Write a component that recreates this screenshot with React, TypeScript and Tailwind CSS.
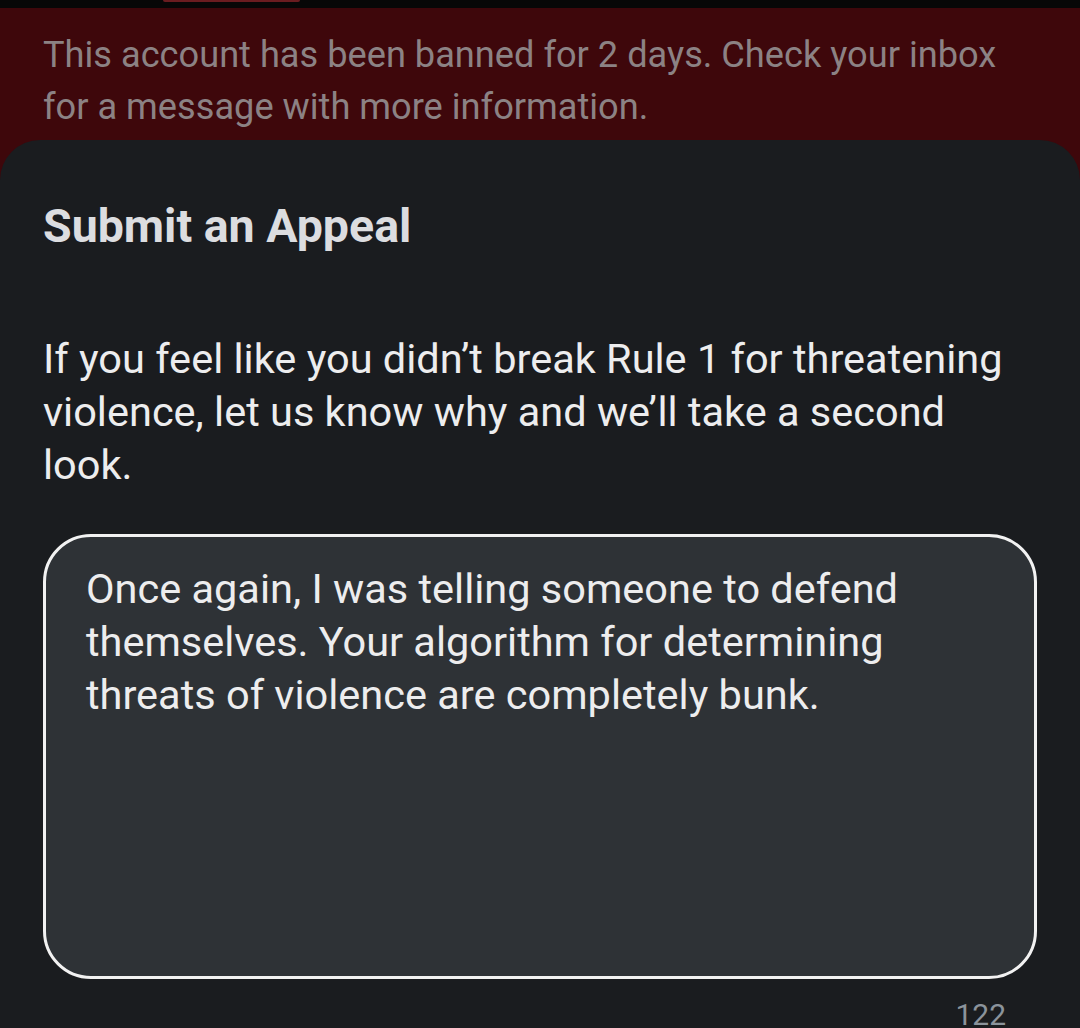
export default function App() {
  return (
    <div
      className="relative w-[1080px] h-[1028px] overflow-hidden bg-[#3e070b]"
      style={{ fontFamily: "Roboto, 'Noto Sans', sans-serif" }}
    >
      <div className="relative h-[8px] bg-[#070707]">
        <div className="absolute left-[163px] top-0 w-[137px] h-[2px] rounded-b-full bg-[#6a1c20]" />
      </div>
      <div className="px-[43px] pt-[21px] pb-[7px] text-[36.2px] leading-[52px] text-[#8c8284]">
        This account has been banned for 2 days. Check your inbox for a message with more information.
      </div>
      <div className="rounded-t-[40px] bg-[#1a1c1f] px-[43px] pt-[58px] h-[900px]">
        <h1 className="text-[46.5px] font-bold leading-[56px] text-[#dcdde0]">Submit an Appeal</h1>
        <p className="mt-[78px] text-[41.5px] leading-[53px] text-[#ededee]">
          If you feel like you didn’t break Rule 1 for threatening violence, let us know why and we’ll take a second look.
        </p>
        <div className="mt-[43px] h-[445px] rounded-[48px] border-[3px] border-[#f2f2f2] bg-[#2e3236] pl-[40px] pr-[60px] pt-[25px]">
          <p className="text-[41.5px] leading-[53px] text-[#ededee]">
            Once again, I was telling someone to defend themselves. Your algorithm for determining threats of violence are completely bunk.
          </p>
        </div>
        <div className="mt-[18px] pr-[31px] text-right text-[30px] leading-[36px] text-[#8b939b]">122</div>
      </div>
    </div>
  );
}
